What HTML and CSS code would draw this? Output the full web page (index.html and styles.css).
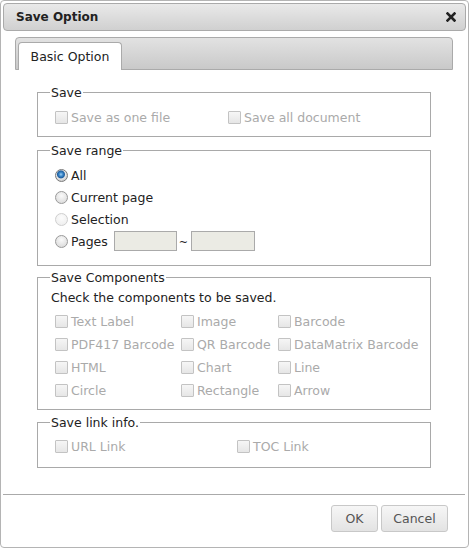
FILE: index.html
```
<!DOCTYPE html>
<html>
<head>
<meta charset="utf-8">
<link rel="stylesheet" href="styles.css">
</head>
<body>
<div class="dialog">
  <div class="titlebar">
    <span class="title">Save Option</span>
    <svg class="close" width="10" height="10" viewBox="0 0 10 10"><path d="M1.5 1.5 L8.5 8.5 M8.5 1.5 L1.5 8.5" stroke="#222" stroke-width="2.6" stroke-linecap="square"/></svg>
  </div>
  <div class="tabbar">
    <div class="tab">Basic Option</div>
  </div>
  <div class="panel">
    <fieldset class="group save">
      <legend>Save</legend>
      <div class="row cols-save">
        <label class="opt off"><span class="cb"></span>Save as one file</label>
        <label class="opt off"><span class="cb"></span>Save all document</label>
      </div>
    </fieldset>
    <fieldset class="group range">
      <legend>Save range</legend>
      <label class="ropt"><span class="rb on"></span>All</label>
      <label class="ropt"><span class="rb"></span>Current page</label>
      <label class="ropt"><span class="rb dis"></span>Selection</label>
      <label class="ropt"><span class="rb"></span>Pages<span class="field first"></span><span class="tilde">~</span><span class="field second"></span></label>
    </fieldset>
    <fieldset class="group comps">
      <legend>Save Components</legend>
      <div class="hint">Check the components to be saved.</div>
      <div class="grid">
        <label class="opt off"><span class="cb"></span>Text Label</label>
        <label class="opt off"><span class="cb"></span>Image</label>
        <label class="opt off"><span class="cb"></span>Barcode</label>
        <label class="opt off"><span class="cb"></span>PDF417 Barcode</label>
        <label class="opt off"><span class="cb"></span>QR Barcode</label>
        <label class="opt off"><span class="cb"></span>DataMatrix Barcode</label>
        <label class="opt off"><span class="cb"></span>HTML</label>
        <label class="opt off"><span class="cb"></span>Chart</label>
        <label class="opt off"><span class="cb"></span>Line</label>
        <label class="opt off"><span class="cb"></span>Circle</label>
        <label class="opt off"><span class="cb"></span>Rectangle</label>
        <label class="opt off"><span class="cb"></span>Arrow</label>
      </div>
    </fieldset>
    <fieldset class="group links">
      <legend>Save link info.</legend>
      <div class="row cols-link">
        <label class="opt off"><span class="cb"></span>URL Link</label>
        <label class="opt off"><span class="cb"></span>TOC Link</label>
      </div>
    </fieldset>
  </div>
  <div class="footer">
    <button class="btn ok">OK</button>
    <button class="btn cancel">Cancel</button>
  </div>
</div>
</body>
</html>
```
FILE: styles.css
```
* { box-sizing: border-box; }
html, body { margin: 0; padding: 0; background: #fff; }
body { font-family: "DejaVu Sans", Verdana, sans-serif; font-size: 12.5px; color: #222; }

.dialog {
  width: 469px; height: 548px;
  border: 1px solid #b4b4b4;
  border-radius: 4px;
  padding: 2px;
  display: flex; flex-direction: column;
  background: #fff;
}
.titlebar {
  height: 28px;
  border: 1px solid #aaa;
  border-radius: 4px;
  background: linear-gradient(#e9e9e9, #d0d0d0);
  display: flex; align-items: center; justify-content: space-between;
  padding: 0 9px 0 12px;
}
.title { font-weight: bold; font-size: 12px; color: #222; }
.close { display: block; }

.tabbar {
  margin: 6px 13px 0 12px;
  height: 33px;
  border: 1px solid #aaa;
  border-radius: 4px 4px 0 0;
  background: linear-gradient(#e2e2e2, #c9c9c9);
  display: flex; align-items: flex-end;
  padding-left: 2px;
}
.tab {
  height: 28px;
  margin-bottom: -1px;
  border: 1px solid #aaa; border-bottom: none;
  border-radius: 4px 4px 0 0;
  background: #fff;
  width: 104px;
  text-align: center;
  line-height: 27px;
  font-size: 12.5px;
  color: #222;
}

.panel { flex: 1; padding: 15px 35px 0 34px; }
.group {
  margin: 0 0 5px; padding: 6px 12px 8px;
  border: 1px solid #a9a9a9;
  min-width: 0;
}
.group legend { padding: 0 1px; font-size: 12.5px; color: #222; line-height: 15px; }
.save { margin-bottom: 6px; padding-bottom: 7px; }

.row { display: grid; padding-left: 5px; }
.cols-save { grid-template-columns: 173px auto; }
.cols-link { grid-template-columns: 182px auto; }

.opt { display: flex; align-items: center; height: 23px; white-space: nowrap; }
.opt.off { color: #aaa; }
.cb {
  width: 13px; height: 13px; margin-right: 3px; flex: none;
  border: 1px solid #c3c3c3;
  border-radius: 1px;
  background: linear-gradient(#f6f6f6, #e6e6e6);
}

.range { padding-top: 6px; padding-bottom: 13px; margin-bottom: 4px; }
.ropt { display: flex; align-items: center; height: 22px; padding-left: 5px; }
.rb {
  width: 13px; height: 13px; margin-right: 3px; flex: none;
  border-radius: 50%;
  border: 1px solid #9a9a9a;
  background: radial-gradient(circle at 50% 35%, #fafafa, #d5d5d5);
}
.rb.dis { border-color: #cfcfcf; background: radial-gradient(circle at 50% 35%, #fcfcfc, #ececec); }
.rb.on { background: radial-gradient(circle at 45% 40%, #9fd0f5 0, #3a86c8 2px, #1f5e9e 3.5px, #e8e8e8 4.5px, #d2d2d2 6px); border-color: #7a7a7a; }
.field {
  display: inline-block; width: 63px; height: 20px;
  border: 1px solid #aaa; background: #ebebe4;
}
.field.first { margin-left: 6px; }
.field.second { width: 64px; }
.tilde { margin: 2px 3px 0 2px; font-size: 11px; }

.comps { padding-top: 5px; padding-bottom: 7px; }
.hint { height: 20px; line-height: 16px; padding-left: 1px; }
.grid { display: grid; grid-template-columns: 126px 97px auto; padding-left: 5px; }

.links { padding-top: 5px; padding-bottom: 9px; }

.footer {
  border-top: 1px solid #aaa;
  margin-right: 1px;
  padding: 10px 17px 13px;
  display: flex; justify-content: flex-end; gap: 3px;
}
.btn {
  height: 27px;
  font-family: "DejaVu Sans", Verdana, sans-serif; font-size: 12.5px;
  color: #555;
  border: 1px solid #c8c8c8;
  border-radius: 3px;
  background: linear-gradient(#f6f6f6, #e3e3e3);
  padding: 0;
}
.btn.ok { width: 47px; }
.btn.cancel { width: 67px; }
```
